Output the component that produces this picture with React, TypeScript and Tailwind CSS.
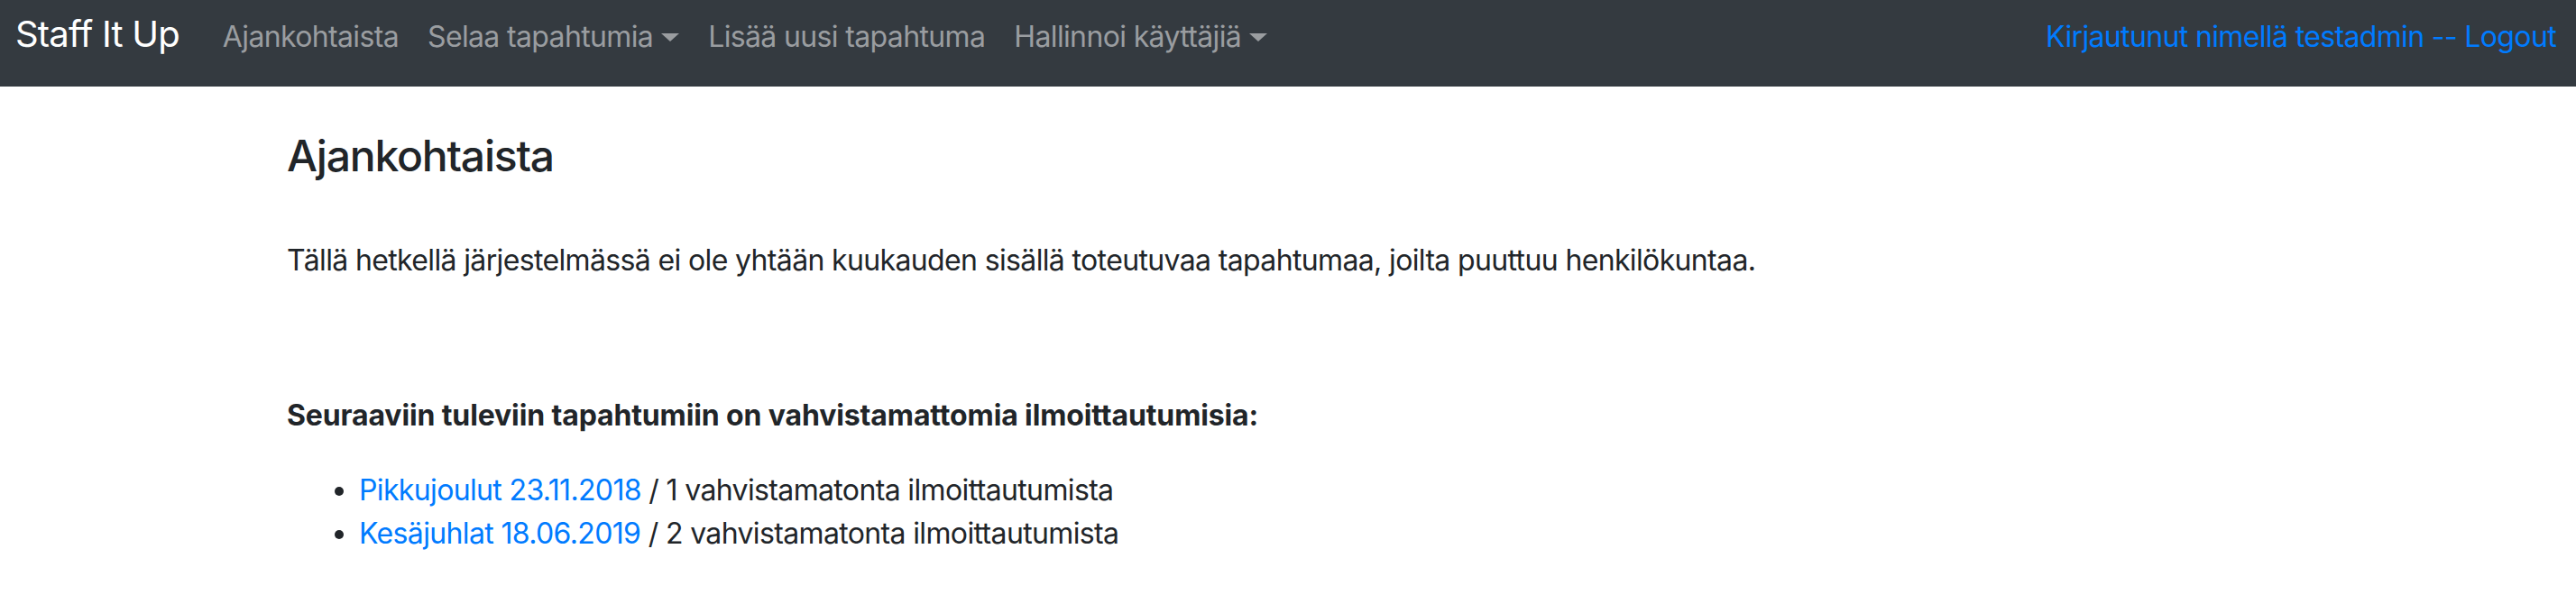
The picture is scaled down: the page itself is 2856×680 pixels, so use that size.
import React from "react";

function Caret() {
  return (
    <span className="ml-[9px] inline-block h-0 w-0 border-x-[10px] border-t-[9px] border-x-transparent border-t-[#9a9da0]" />
  );
}

export default function App() {
  const font = { fontFamily: "Inter, 'Liberation Sans', sans-serif" };
  const link = "px-[16px] text-[32px] leading-[48px] tracking-[-0.02em] text-[#9a9da0]";
  return (
    <div className="min-h-[680px] bg-white text-[#212529]" style={font}>
      <nav className="flex h-[96px] items-baseline bg-[#343a40] pl-[17px] pr-[22px] pt-[8px]">
        <a className="mr-[32px] text-[40px] leading-[60px] tracking-[-0.02em] text-white">Staff It Up</a>
        <div className="flex items-baseline">
          <a className={link}>Ajankohtaista</a>
          <a className="flex items-center self-center px-[16px] text-[32px] leading-[48px] tracking-[-0.02em] text-[#9a9da0]">
            Selaa tapahtumia
            <Caret />
          </a>
          <a className={link}>Lisää uusi tapahtuma</a>
          <a className="flex items-center self-center px-[16px] text-[32px] leading-[48px] tracking-[-0.02em] text-[#9a9da0]">
            Hallinnoi käyttäjiä
            <Caret />
          </a>
        </div>
        <div className="ml-auto text-[32px] leading-[48px] tracking-[-0.02em] text-[#007bff]">
          Kirjautunut nimellä testadmin -- Logout
        </div>
      </nav>
      <main className="mx-auto w-[2280px] px-[30px]">
        <h1 className="mt-[48px] text-[48px] font-medium leading-[58px] tracking-[-0.025em]">Ajankohtaista</h1>
        <p className="mt-[63px] text-[32px] leading-[48px] tracking-[-0.02em]">
          Tällä hetkellä järjestelmässä ei ole yhtään kuukauden sisällä toteutuvaa tapahtumaa, joilta puuttuu henkilökuntaa.
        </p>
        <p className="mt-[124px] text-[32px] font-bold leading-[48px] tracking-[-0.004em]">
          Seuraaviin tuleviin tapahtumiin on vahvistamattomia ilmoittautumisia:
        </p>
        <ul className="mt-[35px] list-disc pl-[80px] text-[32px] leading-[48px] tracking-[-0.02em]">
          <li>
            <a className="text-[#007bff]">Pikkujoulut 23.11.2018</a> / 1 vahvistamatonta ilmoittautumista
          </li>
          <li>
            <a className="text-[#007bff]">Kesäjuhlat 18.06.2019</a> / 2 vahvistamatonta ilmoittautumista
          </li>
        </ul>
      </main>
    </div>
  );
}
